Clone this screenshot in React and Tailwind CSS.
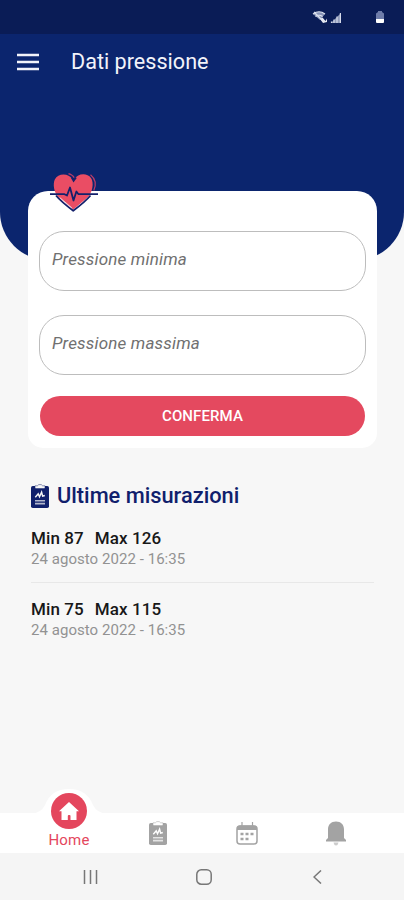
const measurements = [
  { id: 1, min: 87, max: 126, date: '24 agosto 2022 - 16:35' },
  { id: 2, min: 75, max: 115, date: '24 agosto 2022 - 16:35' },
];

function ClipboardIcon({ className, detail }) {
  return (
    <svg viewBox="0 0 18 24" className={className} aria-hidden="true">
      <rect x="0" y="2" width="18" height="22" rx="1.8" fill="currentColor" />
      <path d="M4 1.8H6.4C7 .1 11 .1 11.6 1.8H14V3.6Q14 4.6 13 4.6H5Q4 4.6 4 3.6Z" fill={detail} stroke="currentColor" strokeWidth="0.5" />
      <path d="M4.3 13.2L7.2 9.8L8.5 12.8L10.6 8.2L11.6 12.2L13.8 11.5" fill="none" stroke={detail} strokeWidth="1.4" />
      <path d="M4 16.8H14M4 19.6H14" stroke={detail} strokeWidth="1.6" opacity="0.7" />
    </svg>
  );
}

function HeartIcon() {
  return (
    <svg viewBox="0 0 50 42" className="absolute left-[21px] top-[-20px] h-[42px] w-[50px]" aria-hidden="true">
      <path
        d="M24.3 38.5L10 26.5C4.5 21.5 3.8 13 5.8 8.5C9.2 1.8 20 1.8 24.5 9.2C28.5 2 38 1.5 42 7C45.3 12 43.5 21.5 38.5 26.5Z"
        fill="#ea4d64"
      />
      <path d="M19.5 2.6Q24 4 25.2 6.8M41.5 3.8Q49 10 44.8 19.5" fill="none" stroke="#b93b68" strokeWidth="1.2" />
      <path d="M22.6 6.2L24.6 9.8L27 6.4M7 24.5Q12 30.5 24.2 39.7Q36 31 41.5 24.5" fill="none" stroke="#14206b" strokeWidth="1.8" />
      <path d="M11 26.8L22.5 36.6" stroke="#fff" strokeWidth="0.9" strokeLinecap="round" opacity="0.8" />
      <path d="M1 23.2H15.5L18 24.5L21 16.5L24.5 29.5L27.4 20.5L29.5 23.2H49" fill="none" stroke="#14206b" strokeWidth="1.8" strokeLinejoin="round" />
    </svg>
  );
}

function StatusBar() {
  return (
    <div className="flex h-[34px] items-center bg-[#0a1c56] pl-[312px]">
      <svg viewBox="0 0 32 16" className="h-4 w-8" aria-hidden="true">
        <path d="M1 5Q7 .5 13 5L8 11Z" fill="#8995b8" />
        <path d="M1 5Q7 .5 13 5M3.5 7.5Q7 5 10.5 7.5M2 3L12 13" fill="none" stroke="#dce1ee" strokeWidth="1.2" />
        <path d="M8 10L10.5 8.5L13.5 12L15 9.5V13L11 14Z" fill="#e5e8f1" />
        <path d="M19 14L29 4V14Z" fill="#909bba" />
        <path d="M19.5 14V12.5M22 14V10.5M25 14V7.5M28.4 14V4" stroke="#d5daea" strokeWidth="1.2" />
      </svg>
      <svg viewBox="0 0 10 14" className="ml-[31px] h-3.5 w-2.5" aria-hidden="true">
        <path d="M1 3.5L3 2V1H7V2L9 3.5V9H1Z" fill="#6e7ca9" />
        <path d="M1 9H9V12Q9 13 8 13H2Q1 13 1 12Z" fill="#fff" />
      </svg>
    </div>
  );
}

function Field({ label }) {
  return (
    <input
      aria-label={label}
      placeholder={label}
      className="block h-[60px] w-full rounded-[25px] border border-[#bdbdbd] bg-white px-3 pb-1 text-[17px] italic tracking-[0.18px] text-[#707070] placeholder:text-[#707070]"
    />
  );
}

function BottomNav() {
  return (
    <nav className="relative flex h-10 bg-white text-[#a3a3a3]">
      <svg viewBox="0 0 76 27" className="absolute left-[31px] top-[-26px] h-[27px] w-[76px]" aria-hidden="true">
        <path d="M0 27Q10 26 14 18Q20 2 38 2T62 18Q66 26 76 27Z" fill="#fff" />
      </svg>
      <div className="relative ml-6 flex w-[90px] flex-col items-center text-[#e4465d]">
        <div className="-mt-5 flex h-9 w-9 shrink-0 items-center justify-center rounded-full bg-[#e4465d]">
          <svg viewBox="0 0 20 18" className="h-[18px] w-5" aria-hidden="true">
            <path d="M10 0L20 9.2H17.5V18H11.5V14Q11.5 13 10.5 13H9.8Q8.8 13 8.8 14V18H2.5V9.2H0Z" fill="#fff" />
          </svg>
        </div>
        <span className="mt-[1px] text-[15px] leading-5 tracking-[0.2px]">Home</span>
      </div>
      <div className="-ml-px flex w-[90px] justify-center pt-2">
        <ClipboardIcon className="h-6 w-[18px]" detail="#fff" />
      </div>
      <div className="flex w-[88px] justify-center pt-2">
        <svg viewBox="0 0 22 24" className="h-6 w-[22px]" aria-hidden="true">
          <rect x="1" y="5" width="20" height="18" rx="3" fill="#fff" stroke="currentColor" strokeWidth="1.5" />
          <path d="M1 9V7Q1 4.5 4 4.5H18Q21 4.5 21 7V9Z" fill="currentColor" />
          <path d="M6 1V5M16.5 1V5" stroke="currentColor" strokeWidth="1.2" />
          <path d="M4.5 13H7.5M9.5 13H12.5M14.5 13H17.5M4.5 18H7.5M9.5 18H12.5" stroke="currentColor" strokeWidth="2.4" />
        </svg>
      </div>
      <div className="flex w-[90px] justify-center pt-2">
        <svg viewBox="0 0 20 25" className="h-[25px] w-5" aria-hidden="true">
          <path d="M2 17V8.5C2 3.5 5 .5 10 .5S18 3.5 18 8.5V17L20 19V20.5H0V19Z" fill="currentColor" />
          <path d="M7.5 21.5H12.5Q12 24.3 10 24.5Q8 24.3 7.5 21.5Z" fill="currentColor" opacity="0.55" />
        </svg>
      </div>
    </nav>
  );
}

function SystemNav() {
  return (
    <div className="flex h-[47px] items-center bg-[#f5f5f5] text-[#777]">
      <svg viewBox="0 0 16 14" className="ml-[83px] h-3.5 w-4" fill="none" stroke="currentColor" strokeWidth="1.5" aria-hidden="true">
        <path d="M1.5 0V14M7.5 0V14M13.5 0V14" />
      </svg>
      <svg viewBox="0 0 16 16" className="ml-[97px] h-4 w-4" fill="none" stroke="currentColor" strokeWidth="1.5" aria-hidden="true">
        <rect x="0.8" y="0.8" width="14.4" height="14.4" rx="4.5" />
      </svg>
      <svg viewBox="0 0 9 14" className="ml-[101px] h-3.5 w-[9px]" fill="none" stroke="currentColor" strokeWidth="1.5" aria-hidden="true">
        <path d="M8 .5L1 7L8 13.5" />
      </svg>
    </div>
  );
}

export default function App() {
  return (
    <div className="flex h-[900px] w-[404px] flex-col overflow-hidden bg-[#f7f7f7] font-['Roboto',sans-serif]">
      <header className="h-[260px] shrink-0 overflow-hidden rounded-b-[48px] bg-[#0b256e]">
        <StatusBar />
        <div className="flex h-[55px] items-center pl-[17px] text-[#f2f3fa]">
          <svg viewBox="0 0 22 18" className="h-[18px] w-[22px]" stroke="currentColor" strokeWidth="2.6" aria-hidden="true">
            <path d="M0 2H22M0 9H22M0 16H22" />
          </svg>
          <h1 className="ml-8 pt-0.5 text-[21.6px]">Dati pressione</h1>
        </div>
      </header>

      <main className="flex-1">
        <section className="relative ml-7 mt-[-69px] h-[257px] w-[349px] rounded-b-[15px] rounded-t-[20px] bg-white px-[11px] pt-10">
          <HeartIcon />
          <Field label="Pressione minima" />
          <div className="h-6" />
          <Field label="Pressione massima" />
          <button className="ml-px mt-[21px] block h-10 w-[325px] rounded-full bg-[#e4495f] text-[15px] font-medium tracking-[0.1px] text-white">
            CONFERMA
          </button>
        </section>

        <section className="ml-[31px] mt-[33px] w-[343px]">
          <div className="flex h-7 items-center text-[#10206c]">
            <ClipboardIcon className="mt-0.5 h-6 w-[18px]" detail="#f7f7f7" />
            <h2 className="ml-2 pt-0.5 text-[21.8px] font-medium">Ultime misurazioni</h2>
          </div>
          {measurements.map((item) => (
            <div key={item.id} className="group h-[71px] pt-[18px]">
              <div className="flex gap-[11px] text-[17px] font-medium leading-[22px] tracking-[0.1px] text-[#181818]">
                <span>Min {item.min}</span>
                <span>Max {item.max}</span>
              </div>
              <p className="text-[15px] leading-5 tracking-[0.05px] text-[#929292]">{item.date}</p>
              <div className="mt-[13px] h-px bg-[#e8e8e8] group-last:hidden" />
            </div>
          ))}
        </section>
      </main>

      <BottomNav />
      <SystemNav />
    </div>
  );
}
